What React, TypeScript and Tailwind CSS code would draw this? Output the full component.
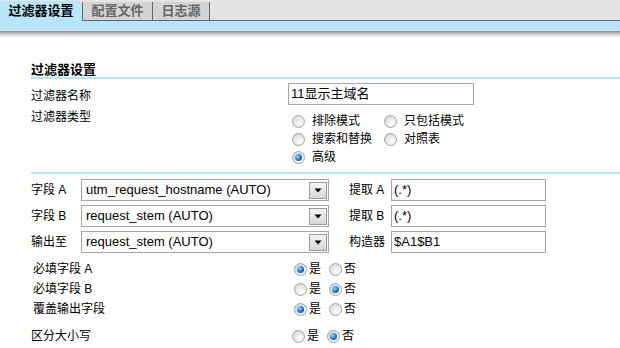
import React from "react";

const Radio = ({ checked }: { checked?: boolean }) => (
  <span className="flex items-center justify-center w-[13px] h-[13px] rounded-full border border-[#a2a2a2] bg-[radial-gradient(circle_at_65%_70%,#ffffff,#d2d2d2)] shrink-0">
    {checked && (
      <span className="block w-[7px] h-[7px] rounded-full bg-[radial-gradient(circle_at_35%_35%,#9ad8ff,#1c74c8_55%,#0a3a78)]" />
    )}
  </span>
);

const Select = ({ value }: { value: string }) => (
  <div className="flex items-center w-[248px] h-[22px] border border-[#a5a5a5] bg-white pl-[4px] pr-[1px]">
    <span className="flex-1 text-[13px] leading-[16px] whitespace-nowrap">{value}</span>
    <span className="flex items-center justify-center w-[18px] h-[17px] border border-[#9a9a9a] bg-gradient-to-b from-[#f4f4f4] to-[#d8d8d8]">
      <svg width="8" height="5" viewBox="0 0 8 5">
        <path d="M0.5 0.5 L7.5 0.5 L4 4.5 Z" fill="#000" />
      </svg>
    </span>
  </div>
);

const TextInput = ({ value, w }: { value: string; w: string }) => (
  <div className={`flex items-center h-[22px] border border-[#a5a5a5] bg-white pl-[2px] text-[13px] leading-[16px] whitespace-nowrap ${w}`}>
    {value}
  </div>
);

const YesNo = ({ yes }: { yes: boolean }) => (
  <div className="flex items-center">
    <Radio checked={yes} />
    <span className="ml-[2px] w-[20px] leading-[16px]">是</span>
    <Radio checked={!yes} />
    <span className="ml-[2px] leading-[16px]">否</span>
  </div>
);

export default function App() {
  return (
    <div className="w-[620px] h-[348px] bg-white overflow-hidden font-['Liberation_Sans','Noto_Sans_CJK_SC',sans-serif] text-[12px] text-black">
      {/* Tab bar */}
      <div className="flex h-[21px] bg-[#e4e4e4]">
        <div className="w-[82px] h-[21px] bg-[#b8e4fc] pt-[3px] text-center font-bold text-[13px] leading-[16px] [clip-path:polygon(0_1px,79px_1px,82px_4px,82px_100%,0_100%)]">
          过滤器设置
        </div>
        <div className="mt-[2px] w-[71px] h-[19px] bg-[#d3d3d3] border-l border-r border-b border-[#666] pt-[1px] text-center font-bold text-[13px] leading-[16px] text-[#666]">
          配置文件
        </div>
        <div className="mt-[2px] w-[57px] h-[19px] bg-[#d3d3d3] border-r border-b border-[#666] pt-[1px] text-center font-bold text-[13px] leading-[16px] text-[#666]">
          日志源
        </div>
        <div className="flex-1 border-b border-[#666]" />
      </div>
      <div className="h-[10px] bg-[#b8e4fc]" />
      <div className="h-[7px] bg-gradient-to-b from-[#8a8a8a] via-[#d6d6d6] to-white" />

      {/* Content */}
      <div className="pl-[31px]">
        <div className="mt-[24px] h-[15px] font-bold text-[13px] leading-[15px]">过滤器设置</div>
        <div className="h-[2px] bg-[#b8e4fc]" />

        <div className="flex mt-[4px]">
          <div className="w-[257px] pt-[5px] leading-[16px]">过滤器名称</div>
          <TextInput value="11显示主域名" w="w-[186px]" />
        </div>

        <div className="flex mt-[4px]">
          <div className="w-[257px] leading-[16px]">过滤器类型</div>
          <div className="pt-[3px] pl-[4px] grid grid-cols-[92px_120px]">
            {[
              ["排除模式", false],
              ["只包括模式", false],
              ["搜索和替换", false],
              ["对照表", false],
              ["高级", true],
            ].map(([label, checked]) => (
              <div key={label as string} className="flex items-center h-[18px]">
                <Radio checked={checked as boolean} />
                <span className="ml-[7px] leading-[16px]">{label as string}</span>
              </div>
            ))}
          </div>
        </div>

        <div className="mt-[6px] h-[2px] bg-[#b8e4fc]" />

        <div className="mt-[5px] flex flex-col gap-[4px]">
          {[
            ["字段 A", "utm_request_hostname (AUTO)", "提取 A", "(.*)"],
            ["字段 B", "request_stem (AUTO)", "提取 B", "(.*)"],
            ["输出至", "request_stem (AUTO)", "构造器", "$A1$B1"],
          ].map(([l, v, l2, v2]) => (
            <div key={l} className="flex items-center h-[22px]">
              <div className="w-[50px] leading-[16px]">{l}</div>
              <Select value={v} />
              <div className="ml-[20px] w-[42px] leading-[16px]">{l2}</div>
              <TextInput value={v2} w="w-[155px]" />
            </div>
          ))}
        </div>

        <div className="mt-[6px] pl-[2px]">
          {[
            ["必填字段 A", true],
            ["必填字段 B", false],
            ["覆盖输出字段", true],
          ].map(([l, y]) => (
            <div key={l as string} className="flex items-center h-[20px]">
              <div className="w-[261px] leading-[16px]">{l as string}</div>
              <YesNo yes={y as boolean} />
            </div>
          ))}
        </div>
        <div className="mt-[7px] flex items-center h-[20px]">
          <div className="w-[261px] leading-[16px]">区分大小写</div>
          <YesNo yes={false} />
        </div>
      </div>
    </div>
  );
}
